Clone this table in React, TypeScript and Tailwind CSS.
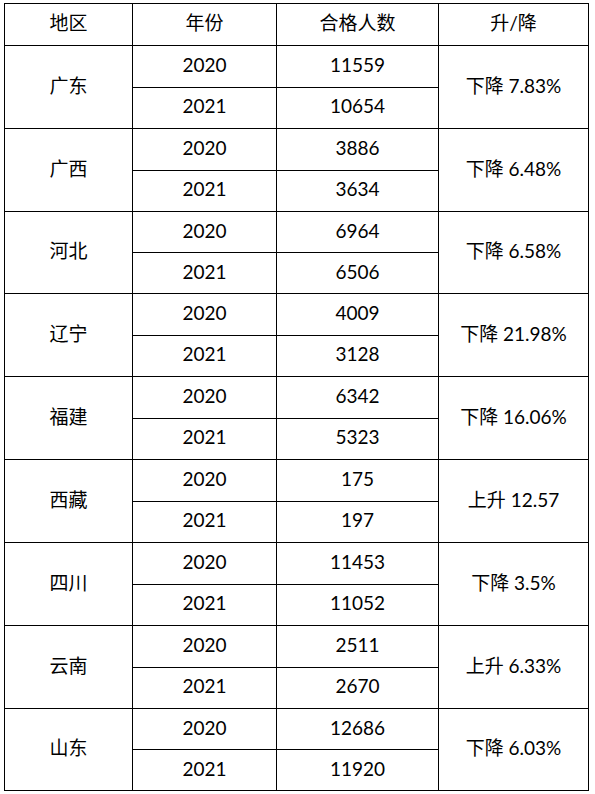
import React from "react";

type Region = { name: string; a: string; b: string; change: string; h: string };

const rows: Region[] = [
  { name: "广东", a: "11559", b: "10654", change: "下降 7.83%", h: "h-[83px]" },
  { name: "广西", a: "3886", b: "3634", change: "下降 6.48%", h: "h-[83px]" },
  { name: "河北", a: "6964", b: "6506", change: "下降 6.58%", h: "h-[82px]" },
  { name: "辽宁", a: "4009", b: "3128", change: "下降 21.98%", h: "h-[83px]" },
  { name: "福建", a: "6342", b: "5323", change: "下降 16.06%", h: "h-[83px]" },
  { name: "西藏", a: "175", b: "197", change: "上升 12.57", h: "h-[83px]" },
  { name: "四川", a: "11453", b: "11052", change: "下降 3.5%", h: "h-[83px]" },
  { name: "云南", a: "2511", b: "2670", change: "上升 6.33%", h: "h-[83px]" },
  { name: "山东", a: "12686", b: "11920", change: "下降 6.03%", h: "h-[82px]" },
];

const cell = "flex items-center justify-center border-r border-black pb-[4px]";

export default function App() {
  return (
    <div
      className="w-[595px] h-[794px] bg-white pt-[3px] pl-[4px] text-black text-[19px] leading-none"
      style={{ fontFamily: "Lato, 'Noto Sans CJK SC', sans-serif" }}
    >
      <div className="w-[585px] border-t border-l border-black">
        <div className="flex h-[42px] border-b border-black">
          <div className={`${cell} w-[128px]`}>地区</div>
          <div className={`${cell} w-[144px]`}>年份</div>
          <div className={`${cell} w-[162px]`}>合格人数</div>
          <div className={`${cell} w-[150px]`}>升/降</div>
        </div>
        {rows.map((r) => (
          <div key={r.name} className={`flex ${r.h} border-b border-black`}>
            <div className={`${cell} w-[128px]`}>{r.name}</div>
            <div className="flex flex-col w-[306px] border-r border-black">
              <div className="flex flex-1 border-b border-black">
                <div className={`${cell} w-[144px]`}>2020</div>
                <div className="flex flex-1 items-center justify-center pb-[4px]">{r.a}</div>
              </div>
              <div className="flex flex-1">
                <div className={`${cell} w-[144px]`}>2021</div>
                <div className="flex flex-1 items-center justify-center pb-[4px]">{r.b}</div>
              </div>
            </div>
            <div className="flex w-[150px] items-center justify-center border-r border-black pb-[4px]">
              {r.change}
            </div>
          </div>
        ))}
      </div>
    </div>
  );
}
